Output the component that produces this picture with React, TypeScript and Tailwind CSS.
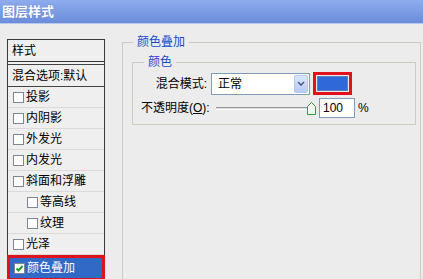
const Box = ({ checked = false }: { checked?: boolean }) => (
  <span className="flex h-[11px] w-[11px] shrink-0 items-center justify-center border border-[#7b8794] bg-white">
    {checked && (
      <svg width="9" height="9" viewBox="0 0 9 9">
        <path d="M1.5 4.5 L3.5 6.5 L7.5 2" fill="none" stroke="#1f9e2a" strokeWidth="2" />
      </svg>
    )}
  </span>
);

const Row = ({ label, indent = false }: { label: string; indent?: boolean }) => (
  <div
    className={`flex h-[21px] items-center gap-[2px] border-b border-[#dadada] ${indent ? "pl-[19px]" : "pl-[5px]"}`}
  >
    <Box />
    <span>{label}</span>
  </div>
);

const App = () => {
  return (
    <div className="h-[279px] w-[423px] overflow-hidden bg-[#ececec] font-['Liberation_Sans','Noto_Sans_CJK_SC',sans-serif] text-[12px] leading-[14px] text-black">
      <div className="flex h-[24px] items-center border-b border-[#b7c7ee] bg-linear-to-b from-[#8eaced] to-[#6b8cda] pl-[2px] text-[13px] font-bold text-white [text-shadow:0_0_1px_#5570b8]">
        图层样式
      </div>

      <div className="flex pt-[15px]">
        {/* style list */}
        <div className="ml-[7px] w-[98px] shrink-0 border-x border-t border-[#3a3a3a] bg-[#efefef]">
          <div className="flex h-[22px] items-center border-b border-[#333] pl-[4px]">样式</div>
          <div className="mt-[2px] flex h-[23px] items-center border-y border-[#444] pl-[4px]">
            混合选项:默认
          </div>
          <Row label="投影" />
          <Row label="内阴影" />
          <Row label="外发光" />
          <Row label="内发光" />
          <Row label="斜面和浮雕" />
          <Row label="等高线" indent />
          <Row label="纹理" indent />
          <Row label="光泽" />
          <div className="-mx-px flex h-[26px] items-center gap-[2px] border-[3px] border-[#e0121c] bg-[#3169c6] pl-[4px] text-white">
            <Box checked />
            <span>颜色叠加</span>
          </div>
        </div>

        {/* settings */}
        <fieldset className="-mt-[4px] ml-[17px] h-[300px] w-[299px] border border-[#cbcbc2]">
          <legend className="ml-[10px] px-[4px] leading-[14px] text-[#1a49c8]">颜色叠加</legend>

          <fieldset className="mt-[6px] ml-[9px] h-[70px] w-[284px] border border-[#cbcbc2]">
            <legend className="ml-[11px] px-[4px] leading-[14px] text-[#1a49c8]">颜色</legend>

            <div className="mt-[3px] flex h-[23px] items-center">
              <span className="w-[74px] shrink-0 whitespace-nowrap text-right">混合模式:</span>
              <div className="ml-[4px] flex h-[22px] w-[99px] items-center border border-[#7f9db9] bg-white">
                <span className="flex-1 pl-[6px]">正常</span>
                <span className="m-px flex h-[18px] w-[14px] items-center justify-center rounded-[2px] border border-[#b5c8f2] bg-linear-to-b from-[#dde7fd] to-[#b6cbf6]">
                  <svg width="8" height="6" viewBox="0 0 8 6">
                    <path d="M1 1 L4 4 L7 1" fill="none" stroke="#4d6185" strokeWidth="1.6" />
                  </svg>
                </span>
              </div>
              <div className="ml-[3px] h-[23px] w-[39px] border-[3px] border-[#e0121c] bg-[#ececec] p-[1px]">
                <div className="h-full w-full border border-[#5f7fb8] bg-[#2f68d9]" />
              </div>
            </div>

            <div className="mt-[3px] flex h-[20px] items-center">
              <span className="ml-[8px] w-[67px] shrink-0 whitespace-nowrap">
                不透明度(<span className="underline">O</span>):
              </span>
              <div className="relative ml-[8px] flex h-[20px] w-[100px] shrink-0 items-center">
                <div className="h-[3px] w-[94px] border-t border-[#9a9a9a] border-b border-b-white bg-[#d8d8d8]" />
                <svg className="absolute left-[91px] top-[4px]" width="9" height="13" viewBox="0 0 9 13">
                  <path d="M4.5 0.5 L8.5 4.5 L8.5 12.5 L0.5 12.5 L0.5 4.5 Z" fill="#eef8ee" stroke="#2e9b3b" />
                </svg>
              </div>
              <div className="ml-[3px] flex h-[20px] w-[36px] shrink-0 items-center border border-[#7f9db9] bg-white pl-[3px]">
                100
              </div>
              <span className="ml-[3px]">%</span>
            </div>
          </fieldset>
        </fieldset>
      </div>
    </div>
  );
};

export default App;
